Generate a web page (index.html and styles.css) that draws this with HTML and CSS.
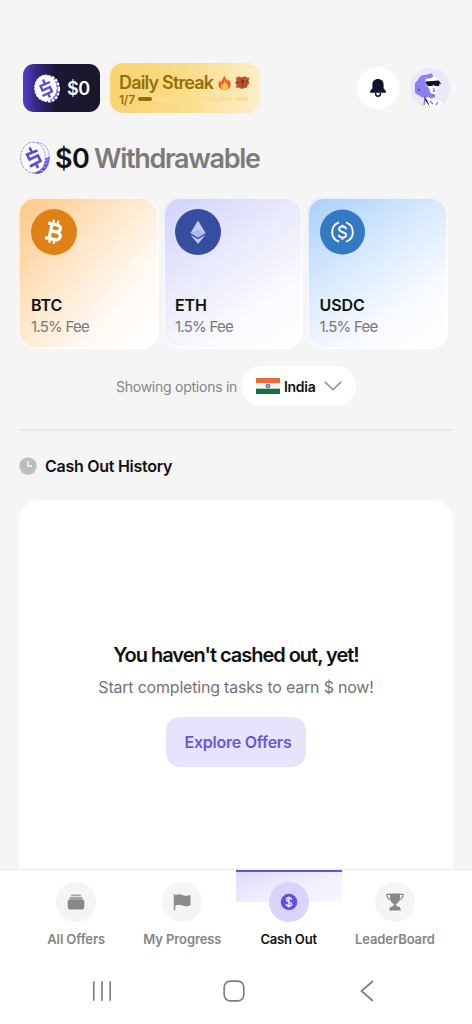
FILE: index.html
```html
<!DOCTYPE html>
<html lang="en">
<head>
<meta charset="utf-8">
<title>Cash Out</title>
<link rel="stylesheet" href="styles.css">
</head>
<body>
<div class="app">
  <header class="topbar">
    <div class="wallet">
      <svg class="wallet-coin" viewBox="0 0 26 29">
        <ellipse cx="15" cy="15" rx="10.500" ry="13" fill="#7467e8"/>
        <ellipse cx="15" cy="15" rx="10" ry="12.500" fill="none" stroke="#fff" stroke-width="2.200" stroke-dasharray="2.500 1.500"/>
        <ellipse cx="11.500" cy="14" rx="10.800" ry="13" fill="#fff"/>
        <ellipse cx="11.500" cy="14" rx="11" ry="13" fill="none" stroke="#fff" stroke-width="1" stroke-dasharray="2 1.500"/>
        <path d="M16 8 6.500 12l2 4.500 7.500-3.500 2 4.500-9.500 4.500M9 5.500l2 4.500M14 19.500l2 4" fill="none" stroke="#5848df" stroke-width="2.300"/>
      </svg>
      <span>$0</span>
    </div>
    <div class="streak">
      <div class="streak-title"><span class="streak-name">Daily Streak</span>
        <svg class="fire" viewBox="0 0 14 16"><path d="M6.500 0C7 3 10 4.500 10 7c1-.5 1-1.500 1-2.500 2 2 3 4.300 2.500 6.800C13 14 10.500 16 7 16S1 14 .5 11.300C.2 9 1.200 7 2.300 5.500c0 1.200.4 2 1.200 2.500C3.500 5 6.500 3.500 6.500 0z" fill="#f15a2b"/><path d="M7.200 5.500C7.500 8.500 11.300 9.500 11 12.300c-.2 2.200-1.900 3.200-4 3.200s-3.900-1-4-3.200c0-1.200.6-2 1.200-2.700.2.700.6 1.200 1 1.300C5.200 9 7 7.800 7.200 5.500z" fill="#ffc83d"/></svg>
        <svg class="gift" viewBox="0 0 16 14"><path d="M1 2 4 .5l3 1L10 .3l3 1.200 2.500.5-1 3.500 1 2.500-2 1.500-.5 3-3 .5-3 1-3-1.500-3 .2.500-3.200L0 7l1.500-2z" fill="#a66026"/><path d="M2 3.500 13 2M3 9.500l10-1.500M5 1l-.5 11M11 1.500 10 12.500" stroke="#d8462b" stroke-width="1.300"/><path d="m6 4 3 1-2 2 3 .5M2 6.500l2 .5M12 5l2 1M7 11l2-1" stroke="#5a3215" stroke-width="1" fill="none"/></svg>
      </div>
      <div class="streak-progress"><span class="streak-count">1/7</span><i class="on"></i><i></i><i></i><i></i><i></i><i></i><i></i></div>
    </div>
    <div class="bell">
      <svg width="18" height="20" viewBox="0 0 18 20"><path d="M9 1C5.500 1 3.400 3.300 3.400 6.500v3.800L1.200 13c-.7 1 0 1.800.9 1.800h13.800c.9 0 1.600-.8.9-1.800l-2.200-2.700V6.500C14.600 3.300 12.500 1 9 1z" fill="#11132b"/><path d="M6.500 15a2.500 3.300 0 0 0 5 0" fill="none" stroke="#11132b" stroke-width="1.500"/></svg>
    </div>
    <svg class="avatar" viewBox="0 0 42 42">
      <circle cx="21" cy="21" r="20" fill="#ebe8fc"/>
      <path d="M17 15 20 9l8 2v12l-2 6-3 2 2 2 7 1 2 4-9 2.500-10-1.500 1-8z" fill="#fff"/>
      <path d="M23 6.500c-3-.5-4 1-7 1.500-4 0-6 2-7 5-3 2-4 5-3 8-1 4 1 7 4 7 2 3 6 3 9 2l3 1.500c3 0 4.500-2 4-4-4 0-5.500-2-5.500-5.500L16 16l.5-4.500C20 12 24 11 24 9z" fill="#8c82ef"/>
      <path d="m16.500 14.500 13-1 1.500 1.500-1 4h-4.500l-1-1.500-1 1.500h-4.500l-2.500-3zM9 21.500l2.500 2.500-2.500-1zM15 29l3 4 3 7-5-7z" fill="#111325"/>
      <path d="M30 15.500l2 1" stroke="#111325"/>
      <path d="m24.500 21 1 3-2 .5M22.500 28l3-.5M29 35l-2 3M16 30l-1 8M21 34l3 3" stroke="#7469d8" stroke-width="1.200" fill="none"/>
    </svg>
  </header>

  <h1 class="balance">
    <svg class="balance-coin" viewBox="0 0 30 34">
      <ellipse cx="17.500" cy="17" rx="12" ry="15.500" fill="#f7f7fb" stroke="#8579e5" stroke-width=".6"/>
      <path d="M29.500 15c.3 8-4 17.500-13 18l-4-1.500C20 30 25 25 25 18z" fill="#6350e2"/>
      <path d="m24.500 17 4.500-1.500M24 20l4.500-1.500M23 23l4.500-1M21.500 26l4 0M19 28.500l4 1.500" stroke="#f5f5f8" stroke-width=".6"/>
      <ellipse cx="13" cy="16.500" rx="12.300" ry="15.300" fill="#fafafc" stroke="#6554df" stroke-width=".6" stroke-dasharray="3 1"/>
      <path d="M17.500 9.500 7 13.500l2.500 5 8.500-4 2.500 5.500-10.500 5.500M9.500 6.500l2.500 5M16 22.500l2 4.500" fill="none" stroke="#5d4ae0" stroke-width="2.600"/>
    </svg>
    <span class="amount">$0</span><span class="withdrawable">Withdrawable</span>
  </h1>

  <section class="methods">
    <article class="card btc">
      <svg class="token" viewBox="0 0 46 46"><circle cx="23" cy="23" r="23" fill="#df8216"/><g fill="none" stroke="#fff" stroke-width="3.200" transform="rotate(12 23 23)"><path d="M15.500 15.500h9c5.500 0 5.500 7 0 7H19h6.500c6 0 6 7.800 0 7.800h-10M19.500 15.500v14.500"/><path d="M20.500 11v4M25 11v4M20.500 30v4.500M25 30v4.500" stroke-width="2.200"/></g></svg>
      <h2>BTC</h2><p>1.5% Fee</p>
    </article>
    <article class="card eth">
      <svg class="token" viewBox="0 0 46 46"><circle cx="23" cy="23" r="23" fill="#354e9f"/><path d="M23 11.500 15.500 24 23 28.400 30.500 24z" fill="#c3cdfd"/><path d="m15.700 26 7.300 4.300 7.300-4.300L23 35z" fill="#c3cdfd"/><path d="m23 20.500-7.500 3.500 7.500 4.400 7.500-4.400z" fill="#abb9f5"/></svg>
      <h2>ETH</h2><p>1.5% Fee</p>
    </article>
    <article class="card usdc">
      <svg class="token" viewBox="0 0 46 46"><circle cx="22.500" cy="23" r="22.500" fill="#3479c4"/><g fill="none" stroke="#fff" stroke-width="1.900" transform="translate(-.5)"><path d="M19.500 13.300a10.300 10.300 0 0 0 0 19.400M26.500 13.300a10.300 10.300 0 0 1 0 19.400"/><path d="M26.500 20.300c0-3.700-7-3.700-7-.2 0 3.700 7.200 2.200 7.200 5.900 0 3.500-7.400 3.500-7.400-.2M23 15.800v2M23 28.300v2.400"/></g></svg>
      <h2>USDC</h2><p>1.5% Fee</p>
    </article>
  </section>

  <div class="region">
    <span class="region-label">Showing options in</span>
    <div class="country">
      <svg width="24" height="16" viewBox="0 0 24 16"><path fill="#ed6c35" d="M0 0h24v5.300H0z"/><path fill="#f4f3f6" d="M0 5.300h24v5.400H0z"/><path fill="#176f43" d="M0 10.700h24V16H0z"/><circle cx="12" cy="8" r="2" fill="#9b9bce" stroke="#5757a4" stroke-width=".8"/></svg>
      <span>India</span>
      <svg class="chevron" width="18" height="10" viewBox="0 0 18 10"><path d="m.7.700 8.300 8 8.300-8" fill="none" stroke="#8c8c8c" stroke-width="1.500"/></svg>
    </div>
  </div>

  <section class="history">
    <h2 class="history-title"><svg width="18" height="18" viewBox="0 0 18 18"><circle cx="9" cy="9" r="8.700" fill="#bdbdbd"/><path d="M9 4v5h4" fill="none" stroke="#f3f3f3" stroke-width="1.500"/></svg><span>Cash Out History</span></h2>
    <div class="empty">
      <h3>You haven't cashed out, yet!</h3>
      <p>Start completing tasks to earn $ now!</p>
      <div class="explore">Explore Offers</div>
    </div>
  </section>

  <footer class="bottom">
    <nav class="tabs">
      <div class="tab"><div class="tab-icon"><svg width="18" height="18" viewBox="0 0 18 18"><path d="M4.500 1.500h9l.8 1.700H3.700zM3 4h12l1 2H2z" fill="#a3a3a3"/><rect x=".7" y="6.300" width="16.600" height="10.200" rx="2.800" fill="#888"/></svg></div><span>All Offers</span></div>
      <div class="tab"><div class="tab-icon"><svg width="18" height="18" viewBox="0 0 18 18"><path d="M.8 1.300h1.500V2.500C5 .8 7 1 10 2.200c3 1 5 .7 7.500-.4v10.500c-3 1.500-5.200 1.300-8 .3-2.800-1-4.800-1.100-7.200.1V17H.8z" fill="#8b8b8b"/></svg></div><span>My Progress</span></div>
      <div class="tab active"><div class="tab-icon"><svg width="18" height="18" viewBox="0 0 18 18"><circle cx="9" cy="9" r="8.300" fill="#6150e5"/><path d="M11.700 6.700C11 4 6.500 4.300 6.500 6.800c0 2.700 5.200 1.400 5.200 4.200 0 2.600-4.800 2.800-5.400 0M9 3.400v11.200" fill="none" stroke="#ede8ff" stroke-width="1.500"/></svg></div><span>Cash Out</span></div>
      <div class="tab"><div class="tab-icon"><svg width="18" height="18" viewBox="0 0 18 18"><path d="M4 .5h10V4c0 4.500-2.200 6.200-4 7v1.300l2.800 1.700h1l1.200 3.500H3L4.200 14h1L8 12.300V11C6.200 10.200 4 8.500 4 4z" fill="#888"/><path d="M4 1.300H.9c0 3 1 5 4.400 5.700M14 1.300h3.100c0 3-1 5-4.400 5.700" fill="none" stroke="#888" stroke-width="1.200"/></svg></div><span>LeaderBoard</span></div>
    </nav>
    <div class="system">
      <svg width="20" height="22" viewBox="0 0 20 22"><path d="M1.800 1.200v19.600M10 1.200v19.600M18.200 1.200v19.600" stroke="#7e7e7e" stroke-width="1.700"/></svg>
      <svg class="home" width="22" height="22" viewBox="0 0 22 22"><rect x="1.200" y="1.200" width="19.600" height="19.600" rx="6" fill="none" stroke="#7e7e7e" stroke-width="1.700"/></svg>
      <svg width="14" height="22" viewBox="0 0 14 22"><path d="M13 1 1.500 11 13 21" fill="none" stroke="#7e7e7e" stroke-width="1.700"/></svg>
    </div>
  </footer>
</div>
</body>
</html>
```
FILE: styles.css
```css
* { box-sizing: border-box; }
body { margin: 0; background: #f5f5f5; font-family: Inter, "Liberation Sans", sans-serif; color: #111; }
h1, h2, h3, p { margin: 0; font-weight: 500; }
svg { display: block; flex: none; }
.app { width: 472px; height: 1024px; overflow: hidden; display: flex; flex-direction: column; }

.topbar { display: flex; align-items: center; height: 50px; margin: 63px 21px 0 23px; flex: none; }
.wallet { width: 77px; height: 48px; border-radius: 11px; display: flex; align-items: center; gap: 7px; padding-left: 11px; color: #fff; font-size: 18px; font-weight: 600; letter-spacing: -.4px; background: linear-gradient(90deg, #5440cd 0, #33277f 18%, #1b1736 42%, #191629 100%); }
.wallet-coin { width: 26px; height: 29px; }
.streak { width: 150px; height: 50px; margin-left: 10px; padding: 8px 9px 0; border-radius: 13px; background: linear-gradient(100deg, #f8d36f 0, #fbdc8a 50%, #feefcd 100%); color: #957006; }
.streak-title { display: flex; align-items: center; height: 22px; font-size: 18px; font-weight: 600; }
.streak-name { letter-spacing: -.83px; white-space: nowrap; width: 99px; }
.fire { width: 13px; height: 15px; }
.gift { width: 15px; height: 13px; margin-left: 4px; }
.streak-progress { display: flex; align-items: center; gap: 2px; height: 12px; font-size: 12px; font-weight: 600; letter-spacing: -.2px; }
.streak-count { width: 17px; }
.streak-progress i { width: 14px; height: 4px; border-radius: 2px; background: #f9df94; }
.streak-progress .on { background: #927009; }
.bell { width: 42px; height: 42px; border-radius: 50%; background: #fff; margin-left: auto; display: flex; align-items: center; justify-content: center; }
.avatar { width: 42px; height: 42px; margin-left: 10px; }

.balance { display: flex; align-items: center; height: 36px; margin: 27px 0 0 20px; font-size: 27px; flex: none; }
.balance-coin { width: 30px; height: 34px; margin-right: 5px; }
.amount { width: 39px; letter-spacing: -.6px; font-weight: 600; }
.withdrawable { color: #7b7b7b; font-weight: 600; letter-spacing: -1.33px; }

.methods { display: flex; gap: 4px; margin: 21px 0 0 18px; flex: none; }
.card { width: 140.5px; height: 152px; padding: 10px 11px; border: 2px solid rgba(255,255,255,.65); border-radius: 17px; background-origin: border-box; }
.btc { background-image: linear-gradient(130deg, #fdc684 0, #ffe5c6 38%, #fffaf5 72%, #fff 100%); }
.eth { background-image: linear-gradient(145deg, #d0d2fa 0, #e9eafc 40%, #fafaff 72%, #fff 100%); }
.usdc { background-image: linear-gradient(145deg, #a9cff8 0, #d9eaff 40%, #f7faff 70%, #fff 100%); }
.token { width: 46px; height: 46px; }
.card h2 { margin-top: 38px; font-size: 16px; line-height: 24px; font-weight: 600; letter-spacing: -.1px; }
.card p { font-size: 15px; line-height: 20px; letter-spacing: -.75px; color: #777; font-weight: 400; white-space: nowrap; }
.eth, .usdc { padding-left: 10.5px; }

.region { display: flex; align-items: center; height: 40px; margin: 17px 0 0 116px; flex: none; }
.region-label { width: 126px; font-size: 14px; letter-spacing: -.25px; color: #858585; white-space: nowrap; }
.country { width: 114px; height: 40px; border-radius: 20px; background: #fff; display: flex; align-items: center; gap: 4px; padding-left: 14px; font-size: 14px; font-weight: 600; letter-spacing: -.3px; }
.chevron { margin-left: 5px; }

.history { margin: 23px 19px 0; border-top: 2px solid #eaeaea; flex: 1; min-height: 0; display: flex; flex-direction: column; }
.history-title { display: flex; align-items: center; gap: 8px; height: 20px; margin-top: 25px; font-size: 16px; font-weight: 600; letter-spacing: -.27px; }
.empty { flex: 1; margin-top: 24px; background: #fff; border-radius: 21px 21px 0 0; padding-top: 141px; text-align: center; }
.empty h3 { font-size: 20px; line-height: 28px; font-weight: 600; letter-spacing: -1.02px; }
.empty p { font-size: 16px; line-height: 22px; margin-top: 7px; color: #747474; font-weight: 400; letter-spacing: -.2px; }
.explore { width: 140px; height: 50px; margin: 19px auto 0; border-radius: 14px; background: #e7e3fc; color: #6958dc; font-size: 16px; font-weight: 600; line-height: 51px; letter-spacing: -.25px; padding-left: 4px; white-space: nowrap; }

.bottom { height: 155px; flex: none; background: #fff; border-top: 1px solid #ebe9f5; }
.tabs { display: flex; height: 88px; margin: 0 24px 0 23px; }
.tab { width: 106.4px; display: flex; flex-direction: column; align-items: center; padding-top: 12px; font-size: 13px; line-height: 16px; font-weight: 600; letter-spacing: -.1px; color: #858585; white-space: nowrap; }
.tab-icon { width: 40px; height: 40px; border-radius: 50%; background: #f5f5f5; display: flex; align-items: center; justify-content: center; margin-bottom: 9px; }
.active { color: #111; letter-spacing: -.2px; background: linear-gradient(160deg, #dfd9ff, #f3f0ff 60%, #f7f5ff) top / 100% 30px no-repeat; border-top: 2px solid #6454d3; padding-top: 10px; }
.active .tab-icon { background: #dad4fc; }
.system { display: flex; align-items: center; justify-content: space-between; padding: 0 98px 0 92px; height: 22px; margin-top: 22px; }
.home { margin-right: 5px; }
```
